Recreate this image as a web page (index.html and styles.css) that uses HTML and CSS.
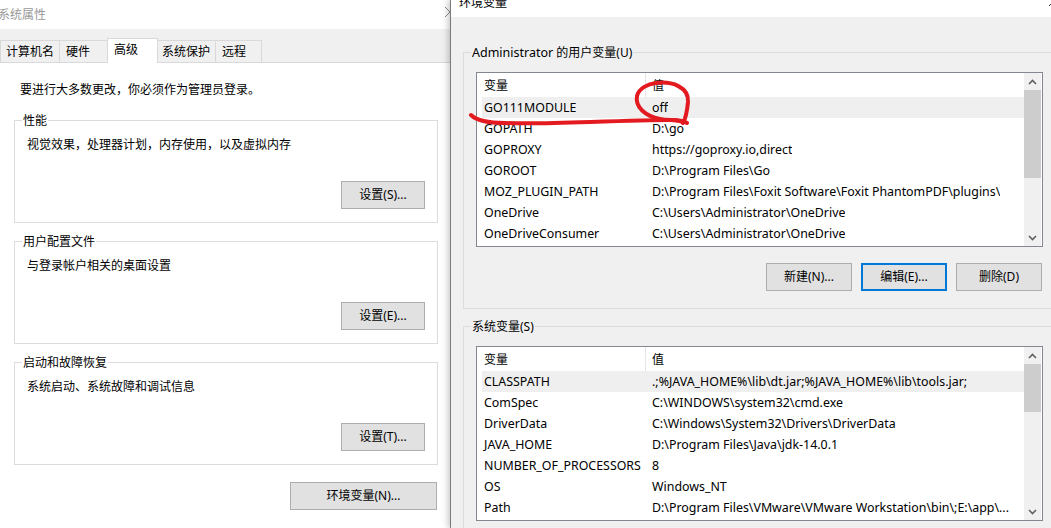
FILE: index.html
```html
<!DOCTYPE html>
<html lang="zh-CN">
<head>
<meta charset="utf-8">
<title>系统属性 / 环境变量</title>
<link rel="stylesheet" href="styles.css">
</head>
<body>
<div class="desktop">
  <section class="win-left">
    <div class="tb-left">
      <span class="tb-left-text">系统属性</span>
      <svg class="close-l" width="10" height="10" viewBox="0 0 10 10"><path d="M0 0L10 10M10 0L0 10"/></svg>
    </div>
    <div class="tabstrip">
      <div class="tab t1">计算机名</div>
      <div class="tab t2">硬件</div>
      <div class="tab t3 active">高级</div>
      <div class="tab t4">系统保护</div>
      <div class="tab t5">远程</div>
    </div>
    <div class="panel">
      <div class="msg">要进行大多数更改，你必须作为管理员登录。</div>
      <div class="lgroup">
        <div class="legend">性能</div>
        <div class="desc">视觉效果，处理器计划，内存使用，以及虚拟内存</div>
        <button class="btn btn-set">设置(S)...</button>
      </div>
      <div class="lgroup">
        <div class="legend">用户配置文件</div>
        <div class="desc">与登录帐户相关的桌面设置</div>
        <button class="btn btn-set">设置(E)...</button>
      </div>
      <div class="lgroup">
        <div class="legend">启动和故障恢复</div>
        <div class="desc">系统启动、系统故障和调试信息</div>
        <button class="btn btn-set">设置(T)...</button>
      </div>
      <button class="btn btn-env">环境变量(N)...</button>
    </div>
  </section>

  <section class="win-right">
    <div class="tb-right">
      <span class="tb-right-text">环境变量</span>
      <svg class="close-r" width="10" height="10" viewBox="0 0 10 10"><path d="M0 0L10 10M10 0L0 10"/></svg>
    </div>
    <div class="rbody">
      <div class="rgroup">
        <div class="legend rlegend"><span class="latin">Administrator</span> 的用户变量(U)</div>
        <div class="list">
          <div class="list-body">
            <div class="lhead"><div class="h-name">变量</div><div class="h-val">值</div></div>
            <div class="row sel"><div class="c-name">GO111MODULE</div><div class="c-val">off</div></div>
            <div class="row"><div class="c-name">GOPATH</div><div class="c-val">D:\go</div></div>
            <div class="row"><div class="c-name">GOPROXY</div><div class="c-val">https://goproxy.io,direct</div></div>
            <div class="row"><div class="c-name">GOROOT</div><div class="c-val">D:\Program Files\Go</div></div>
            <div class="row"><div class="c-name">MOZ_PLUGIN_PATH</div><div class="c-val">D:\Program Files\Foxit Software\Foxit PhantomPDF\plugins\</div></div>
            <div class="row"><div class="c-name">OneDrive</div><div class="c-val">C:\Users\Administrator\OneDrive</div></div>
            <div class="row"><div class="c-name">OneDriveConsumer</div><div class="c-val">C:\Users\Administrator\OneDrive</div></div>
          </div>
          <div class="sb">
            <div class="sb-btn"><svg width="9" height="6" viewBox="0 0 9 6"><path d="M1 5L4.5 1.5L8 5"/></svg></div>
            <div class="thumb thumb-user"></div>
            <div class="sb-track"></div>
            <div class="sb-btn"><svg width="9" height="6" viewBox="0 0 9 6"><path d="M1 1L4.5 4.5L8 1"/></svg></div>
          </div>
        </div>
        <div class="btnrow">
          <button class="btn btn-r">新建(N)...</button>
          <button class="btn btn-r focus">编辑(E)...</button>
          <button class="btn btn-r">删除(D)</button>
        </div>
      </div>

      <div class="rgroup">
        <div class="legend rlegend">系统变量(S)</div>
        <div class="list">
          <div class="list-body">
            <div class="lhead"><div class="h-name">变量</div><div class="h-val">值</div></div>
            <div class="row sel"><div class="c-name">CLASSPATH</div><div class="c-val">.;%JAVA_HOME%\lib\dt.jar;%JAVA_HOME%\lib\tools.jar;</div></div>
            <div class="row"><div class="c-name">ComSpec</div><div class="c-val">C:\WINDOWS\system32\cmd.exe</div></div>
            <div class="row"><div class="c-name">DriverData</div><div class="c-val">C:\Windows\System32\Drivers\DriverData</div></div>
            <div class="row"><div class="c-name">JAVA_HOME</div><div class="c-val">D:\Program Files\Java\jdk-14.0.1</div></div>
            <div class="row"><div class="c-name">NUMBER_OF_PROCESSORS</div><div class="c-val">8</div></div>
            <div class="row"><div class="c-name">OS</div><div class="c-val">Windows_NT</div></div>
            <div class="row"><div class="c-name">Path</div><div class="c-val">D:\Program Files\VMware\VMware Workstation\bin\;E:\app\...</div></div>
          </div>
          <div class="sb">
            <div class="sb-btn"><svg width="9" height="6" viewBox="0 0 9 6"><path d="M1 5L4.5 1.5L8 5"/></svg></div>
            <div class="thumb thumb-sys"></div>
            <div class="sb-track"></div>
            <div class="sb-btn"><svg width="9" height="6" viewBox="0 0 9 6"><path d="M1 1L4.5 4.5L8 1"/></svg></div>
          </div>
        </div>
      </div>
    </div>
  </section>

  <svg class="ink" width="1051" height="528" viewBox="0 0 1051 528">
    <path d="M683 123C680 119 670 121 660 119C645 116 635 107 637 96C639 88 648 84 656 83C672 81 689 87 688 102C687 112 686 118 683 123"/>
    <path d="M471 115C476 120 488 123 505 123C530 124 560 123 590 122C620 121 650 120 670 120C678 120 684 121 687 123"/>
  </svg>
</div>
</body>
</html>
```

FILE: styles.css
```css
* { box-sizing: border-box; }
html, body { margin: 0; padding: 0; background: #fff; }
body {
  font-family: "Noto Sans", "Noto Sans CJK SC", sans-serif;
  font-size: 12px;
  color: #000;
}
.desktop {
  position: relative;
  display: flex;
  width: 1051px;
  height: 528px;
  overflow: hidden;
}

/* ---------- left window: 系统属性 ---------- */
.win-left {
  width: 450px;
  flex-shrink: 0;
  background: #fff;
  display: flex;
  flex-direction: column;
}
.win-left > * { flex-shrink: 0; }
.tb-left {
  height: 29px;
  display: flex;
  align-items: center;
  justify-content: space-between;
  color: #999;
}
.tb-left-text { margin-left: -2px; line-height: 16px; }
.close-l {
  align-self: flex-start;
  margin-top: 7px;
  margin-right: -5px;
  stroke: #888;
  stroke-width: 1;
  fill: none;
}
.tabstrip {
  height: 34px;
  background: #f0f0f0;
  border-bottom: 1px solid #d9d9d9;
  display: flex;
  align-items: flex-end;
}
.tab {
  height: 22px;
  padding: 3px 0 0 6px;
  line-height: 16px;
  border: 1px solid #d9d9d9;
  border-bottom: none;
  background: #f0f0f0;
  white-space: nowrap;
}
.tab + .tab { margin-left: -1px; }
.t1 { width: 60px; padding-left: 5px; }
.t2 { width: 49px; }
.t3 { width: 51px; }
.t4 { width: 59px; padding-left: 4px; }
.t5 { width: 47px; }
.tab.active {
  height: 25px;
  margin-bottom: -1px;
  padding-top: 3px;
  background: #fff;
  position: relative;
}
.panel {
  flex: 1 0 auto;
  background: #fff;
  padding-top: 19px;
  display: flex;
  flex-direction: column;
}
.panel > * { flex-shrink: 0; }
.msg { padding-left: 20px; line-height: 16px; height: 16px; margin-bottom: 22px; }
.lgroup {
  margin-left: 14px;
  width: 424px;
  height: 103px;
  border: 1px solid #dcdcdc;
  padding: 0 12px 13px 12px;
  display: flex;
  flex-direction: column;
}
.lgroup + .lgroup { margin-top: 18px; }
.legend {
  margin-top: -8px;
  margin-left: -5px;
  padding: 0 1px;
  line-height: 16px;
  height: 16px;
  background: #fff;
  align-self: flex-start;
  white-space: nowrap;
}
.desc { margin-top: 8px; line-height: 16px; }
.btn {
  font: inherit;
  color: #000;
  background: #e1e1e1;
  border: 1px solid #adadad;
  padding: 0;
  height: 28px;
  text-align: center;
  line-height: 26px;
}
.btn-set { margin-top: auto; align-self: flex-end; width: 84px; }
.btn-env { margin-top: 17px; margin-left: 290px; width: 147px; align-self: flex-start; }

/* ---------- right window: 环境变量 ---------- */
.win-right {
  position: relative;
  z-index: 1;
  width: 620px;
  flex-shrink: 0;
  border-left: 1px solid #7b7b7b;
  background: #f0f0f0;
  box-shadow: -2px 0 6px rgba(0, 0, 0, 0.22);
  display: flex;
  flex-direction: column;
}
.win-right > * { flex-shrink: 0; }
.tb-right {
  height: 17px;
  background: #fff;
  display: flex;
  justify-content: space-between;
  align-items: flex-start;
  padding-left: 8px;
}
.tb-right-text { margin-top: -3px; line-height: 12px; }
.close-r {
  margin-top: -4px;
  margin-right: 11px;
  stroke: #333;
  stroke-width: 1;
  fill: none;
}
.rbody { padding: 35px 12px 0 12px; }
.rgroup {
  border: 1px solid #dcdcdc;
  padding: 0 14px 17px 12px;
  display: flex;
  flex-direction: column;
}
.rgroup > * { flex-shrink: 0; }
.rgroup + .rgroup { margin-top: 17px; }
.rlegend { background: #f0f0f0; }
.latin { font-size: 12.5px; }
.list {
  margin-top: 11px;
  height: 175px;
  border: 1px solid #828790;
  background: #fff;
  display: flex;
}
.list-body {
  flex: 1;
  padding-left: 5px;
  min-width: 0;
  overflow: hidden;
}
.lhead { height: 24px; display: flex; }
.h-name {
  width: 164px;
  padding-left: 2px;
  border-right: 1px solid #e5e5e5;
  display: flex;
  align-items: center;
}
.h-val { padding-left: 6px; display: flex; align-items: center; }
.row {
  height: 21px;
  line-height: 21px;
  display: flex;
  white-space: nowrap;
  font-size: 12.4px;
}
.row.sel { background: #efefef; }
.c-name { width: 164px; padding-left: 2px; flex-shrink: 0; overflow: hidden; }
.c-val { padding-left: 6px; overflow: hidden; }
.sb {
  width: 17px;
  margin-right: 1px;
  background: #f0f0f0;
  display: flex;
  flex-direction: column;
}
.sb-btn {
  height: 17px;
  flex-shrink: 0;
  display: flex;
  align-items: center;
  justify-content: center;
}
.sb-btn svg { stroke: #606060; stroke-width: 1.6; fill: none; }
.thumb { background: #cdcdcd; flex-shrink: 0; }
.thumb-user { height: 88px; }
.thumb-sys { height: 48px; }
.sb-track { flex: 1; }
.btnrow {
  margin-top: 16px;
  margin-right: 1px;
  display: flex;
  justify-content: flex-end;
  gap: 9px;
}
.btn-r { width: 86px; }
.btn-r.focus { border: 2px solid #0078d7; line-height: 24px; }

/* ---------- red hand-drawn annotation ---------- */
.ink {
  position: absolute;
  left: 0;
  top: 0;
  z-index: 2;
  pointer-events: none;
  fill: none;
  stroke: #e31b20;
  stroke-width: 4;
  stroke-linecap: round;
  stroke-linejoin: round;
}
```
